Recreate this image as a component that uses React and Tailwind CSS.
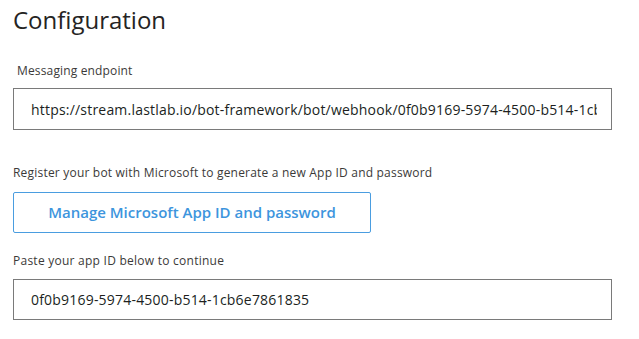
export default function App() {
  return (
    <div className="w-[639px] h-[339px] bg-white overflow-hidden pl-[13px] pr-[27px]" style={{ fontFamily: '"Open Sans", "Noto Sans", sans-serif' }}>
      <h1 className="pt-[4px] text-[24px] leading-[32px] text-[#252423] font-normal">Configuration</h1>
      <div className="mt-[27px] pl-[4px] text-[12px] leading-[16px] text-[#3b3a39] tracking-[0.15px]">Messaging endpoint</div>
      <div className="mt-[9px] h-[42px] border border-[#7a7a7a] flex items-center pl-[17px] pr-[14px] overflow-hidden">
        <span className="whitespace-nowrap overflow-hidden text-[14px] text-[#201f1e] tracking-[0.2px]">https://stream.lastlab.io/bot-framework/bot/webhook/0f0b9169-5974-4500-b514-1cb6e7861835</span>
      </div>
      <div className="mt-[35px] text-[12px] leading-[16px] text-[#3b3a39] tracking-[0.2px]">Register your bot with Microsoft to generate a new App ID and password</div>
      <button className="mt-[11px] w-[358px] h-[41px] border border-[#4a9de0] rounded-[2px] text-[15px] font-semibold text-[#3d95dd] bg-white">Manage Microsoft App ID and password</button>
      <div className="mt-[20px] text-[12px] leading-[16px] text-[#3b3a39] tracking-[0.25px]">Paste your app ID below to continue</div>
      <div className="mt-[10px] h-[41px] border border-[#7a7a7a] flex items-center pl-[17px]">
        <span className="text-[14px] text-[#201f1e] tracking-[0.2px]">0f0b9169-5974-4500-b514-1cb6e7861835</span>
      </div>
    </div>
  );
}
